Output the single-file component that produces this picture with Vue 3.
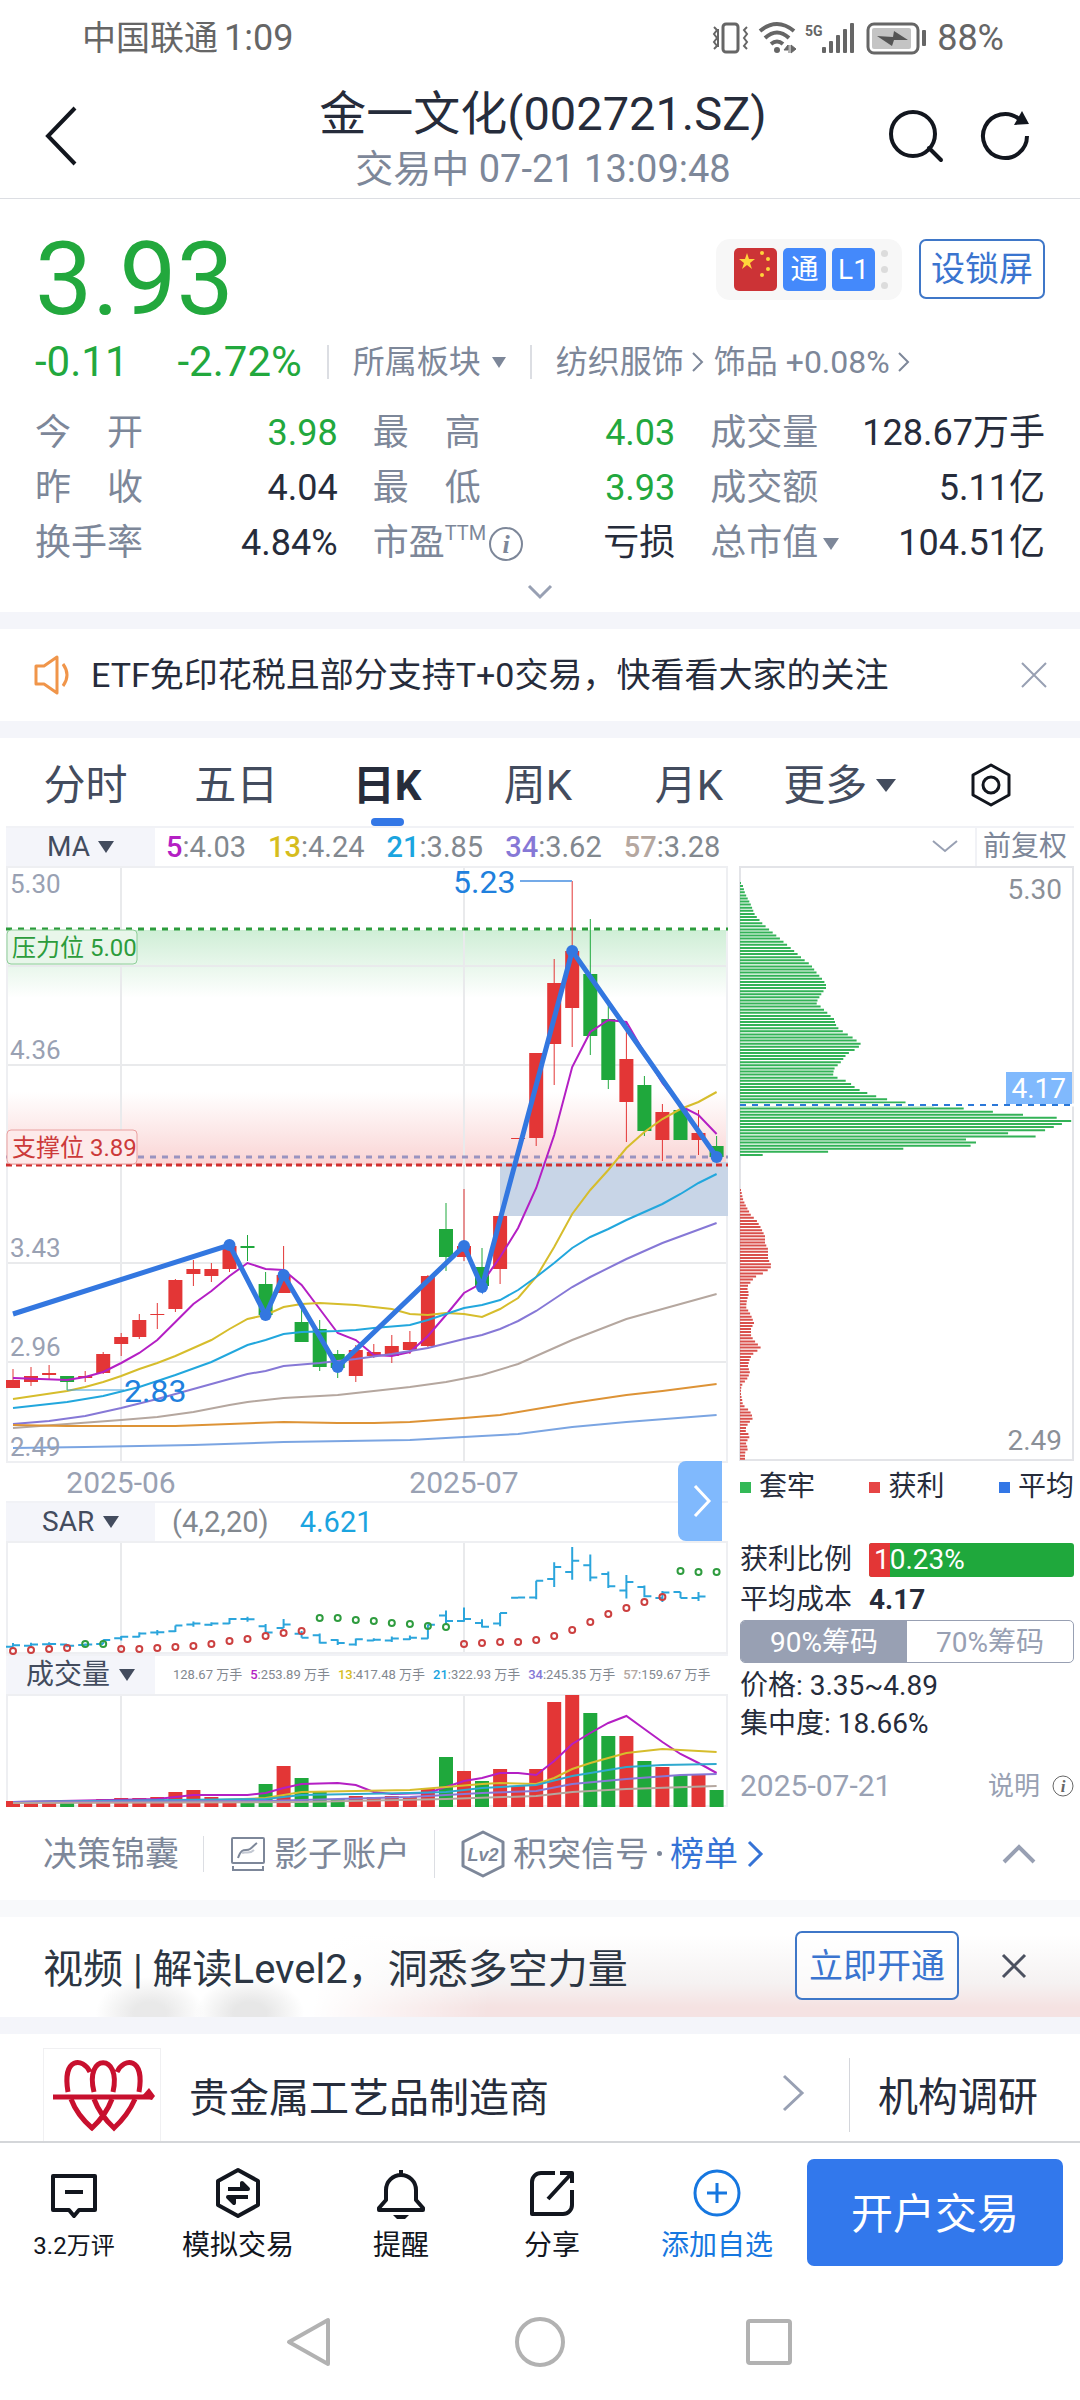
<template>
  <div class="page">
    <div class="status-bar">
      <span>中国联通</span>
      <span class="time">1:09</span>
      <svg class="status-icons" width="216" height="34" viewBox="0 0 216 34">
        <g fill="none" stroke="#666" stroke-width="3">
          <rect x="12" y="3" width="15" height="28" rx="3" />
          <path d="M3 6l3 3-3 4 3 4-3 4 3 4-3 3M7 8v18M36 6l-3 3 3 4-3 4 3 4-3 4 3 3" stroke-width="2" />
          <path d="M49 10Q66-4 83 10M54 17Q66 6 78 17M60 23Q66 18 72 23" stroke-width="4" />
          <rect x="157" y="3" width="50" height="29" rx="6" />
        </g>
        <g fill="#666">
          <circle cx="66" cy="29" r="3" />
          <path d="M78 24v8M73 29l4-5v5zM80 24v8l5-4z" stroke="#666" />
          <rect x="111" y="26" width="4" height="6" rx="1" />
          <rect x="118" y="20" width="4" height="12" rx="1" />
          <rect x="125" y="14" width="4" height="18" rx="1" />
          <rect x="132" y="8" width="4" height="24" rx="1" />
          <rect x="139" y="2" width="4" height="30" rx="1" />
          <rect x="211" y="9" width="4" height="16" rx="1" />
          <text x="94" y="15" font-size="14" font-weight="700">5G</text>
        </g>
        <rect x="161" y="7" width="39" height="21" rx="2" fill="#c4c4c4" />
        <path d="M166 15l16 1 1-6 14 9-14 0-2 6z" fill="#555" />
      </svg>
      <span>88%</span>
    </div>

    <header class="header">
      <button class="icon-btn back" aria-label="返回">
        <svg width="34" height="60" viewBox="0 0 34 60"><path d="M31 2L4 30l27 28" fill="none" stroke="#12161e" stroke-width="4" /></svg>
      </button>
      <div class="title">
        <h1>金一文化(002721.SZ)</h1>
        <p>交易中 07-21 13:09:48</p>
      </div>
      <div class="header-actions">
        <button class="icon-btn" aria-label="搜索">
          <svg width="56" height="54" viewBox="0 0 56 54" fill="none" stroke="#12161e" stroke-width="4">
            <circle cx="25" cy="25" r="22" /><path d="M41 39l12 12" stroke-linecap="round" />
          </svg>
        </button>
        <button class="icon-btn" aria-label="刷新">
          <svg width="52" height="54" viewBox="0 0 52 54" fill="none" stroke="#12161e" stroke-width="4">
            <path d="M47 27A22 22 0 1 1 39 10" /><path d="M34 16l8-14 7 13z" fill="#12161e" stroke="none" />
          </svg>
        </button>
      </div>
    </header>

    <section class="quote">
      <div class="price-row">
        <strong class="price">3.93</strong>
        <div class="chips">
          <span class="chip flag">
            <svg width="43" height="43" viewBox="0 0 43 43" fill="#ffd53a">
              <path d="M13 5l2 6h6l-5 4 2 6-5-4-5 4 2-6-5-4h6z" />
              <circle cx="28" cy="5" r="2" /><circle cx="34" cy="11" r="2" />
              <circle cx="34" cy="21" r="2" /><circle cx="28" cy="27" r="2" />
            </svg>
          </span>
          <span class="chip">通</span>
          <span class="chip">L1</span>
          <span class="dots"><i></i><i></i><i></i></span>
        </div>
        <button class="outline-btn lock">设锁屏</button>
      </div>
      <div class="change-row">
        <span class="change">-0.11</span>
        <span class="change pct">-2.72%</span>
        <span class="sector-select">
          <select aria-label="所属板块"><option>所属板块</option></select><i class="caret small"></i>
        </span>
        <a href="#" class="sector">纺织服饰<svg width="14" height="20" viewBox="0 0 14 20"><path d="M2 1l9 9-9 9" /></svg></a>
        <a href="#" class="sector">饰品 +0.08%<svg width="14" height="20" viewBox="0 0 14 20"><path d="M2 1l9 9-9 9" /></svg></a>
      </div>
      <dl class="stats">
        <div v-for="s in stats" :key="s.label" class="stat">
          <dt>
            <span class="stat-label">{{ s.label }}</span>
            <template v-if="s.info">
              <sup>TTM</sup>
              <svg width="36" height="36" viewBox="0 0 36 36"><circle cx="18" cy="18" r="16" fill="none" stroke="#7d8799" stroke-width="2" /><text x="18" y="27" text-anchor="middle" class="info-i">i</text></svg>
            </template>
            <i v-if="s.caret" class="caret"></i>
          </dt>
          <dd :class="{ down: s.down }">{{ s.value }}</dd>
        </div>
      </dl>
      <button class="expand" aria-label="展开">
        <svg width="26" height="16" viewBox="0 0 26 16"><path d="M2 2l11 11L24 2" fill="none" stroke="#98a0b3" stroke-width="3" /></svg>
      </button>
    </section>

    <section class="notice">
      <svg width="38" height="42" viewBox="0 0 38 42" fill="none" stroke="#f0954a" stroke-width="3" stroke-linejoin="round">
        <path d="M3 12h8L24 3v36L11 30H3zM30 10q8 11 0 22" />
      </svg>
      <span>ETF免印花税且部分支持T+0交易，快看看大家的关注</span>
      <button class="icon-btn" aria-label="关闭">
        <svg width="26" height="26" viewBox="0 0 26 26"><path d="M1 1l24 24M25 1L1 25" stroke="#98a0b3" stroke-width="2" /></svg>
      </button>
    </section>

    <nav class="tabs">
      <button v-for="t in tabs" :key="t" :class="['tab', { active: t === currentTab }]" @click="currentTab = t">{{ t }}</button>
      <span class="tab more">
        <select aria-label="更多周期"><option>更多</option></select><i class="caret"></i>
      </span>
      <button class="tab setting" aria-label="设置">
        <svg width="42" height="46" viewBox="0 0 42 46" fill="none" stroke="#12161e" stroke-width="3">
          <path d="M21 3l18 10v20L21 43 3 33V13z" stroke-linejoin="round" /><circle cx="21" cy="23" r="8" />
        </svg>
      </button>
    </nav>

    <section class="chart-area">
      <div class="ma-head">
        <div class="indicator">
          <select aria-label="主图指标"><option>MA</option></select><i class="caret"></i>
        </div>
        <div class="ma-values">
          <span v-for="m in maValues" :key="m.n"><b :style="{ color: m.color }">{{ m.n }}</b>:{{ m.v }}</span>
        </div>
        <svg class="ma-more" width="26" height="14" viewBox="0 0 26 14"><path d="M1 1l12 10L25 1" fill="none" stroke="#98a0b3" stroke-width="2" /></svg>
        <button class="adjust">前复权</button>
      </div>

      <div class="charts">
        <div class="left">
          <!-- K line -->
          <svg class="chart" viewBox="0 0 722 635">
            <defs>
              <linearGradient id="resist" x1="0" y1="0" x2="0" y2="1">
                <stop offset="0" stop-color="#cfeed6" /><stop offset="1" stop-color="#fff" />
              </linearGradient>
              <linearGradient id="support" x1="0" y1="0" x2="0" y2="1">
                <stop offset="0" stop-color="#fff" /><stop offset="1" stop-color="#fad4d4" />
              </linearGradient>
            </defs>
            <rect x="0" y="64" width="722" height="68" fill="url(#resist)" />
            <rect x="0" y="226" width="722" height="73" fill="url(#support)" />
            <path class="grid" d="M0 100H722M0 199H722M0 397H722M0 496H722M115 1V596M458 1V596" />
            <path class="frame" d="M1 1H721V596H1z" />
            <rect x="494" y="296" width="228" height="54" fill="#c8d5e7" />
            <path d="M0 63H722" stroke="#2c9c3c" stroke-width="3" stroke-dasharray="6 6" />
            <path d="M0 291H722" stroke="#9a93c0" stroke-width="3" stroke-dasharray="6 6" />
            <path d="M0 299H722" stroke="#d03030" stroke-width="3" stroke-dasharray="6 4" />

            <g v-for="(c, i) in candles" :key="i" :fill="c[0] ? red : green" :stroke="c[0] ? red : green">
              <path :d="`M${cx(i)} ${c[1]}V${c[4]}`" stroke-width="1" />
              <rect :x="cx(i) - 7" :y="c[2]" width="14" :height="c[3] - c[2]" stroke="none" />
            </g>
            <path v-for="l in maLines" :key="l.color" :d="linePath(l.pts)" :stroke="l.color" fill="none" stroke-width="2" />

            <path :d="linePath(trend)" fill="none" stroke="#3377e0" stroke-width="5" />
            <circle v-for="p in trend.slice(1)" :key="p[0]" :cx="cx(p[0])" :cy="p[1]" r="6" fill="#3377e0" />

            <g class="axis">
              <text x="4" y="27">5.30</text>
              <text x="4" y="193">4.36</text>
              <text x="4" y="391">3.43</text>
              <text x="4" y="490">2.96</text>
              <text x="4" y="590">2.49</text>
            </g>
            <g class="mark">
              <path d="M514 15H566" stroke="#74aae8" stroke-width="2" />
              <text x="447" y="27">5.23</text>
              <path d="M61 524H118" stroke="#3f9ed8" stroke-width="1" />
              <text x="118" y="536">2.83</text>
            </g>
            <g class="level">
              <rect x="1" y="64" width="130" height="34" rx="4" fill="#e8f6ea" stroke="#8fce99" />
              <text x="6" y="90" fill="#2c9c3c">压力位 5.00</text>
              <rect x="1" y="264" width="130" height="34" rx="4" fill="#fdeaea" stroke="#eaa0a0" />
              <text x="6" y="290" fill="#cc3a3a">支撑位 3.89</text>
            </g>
            <g class="dates">
              <text x="115" y="627">2025-06</text>
              <text x="458" y="627">2025-07</text>
            </g>
          </svg>
          <button class="next" aria-label="展开筹码">
            <svg width="20" height="32" viewBox="0 0 20 32"><path d="M2 1l14 15L2 31" fill="none" stroke="#fff" stroke-width="3" /></svg>
          </button>

          <!-- SAR -->
          <div class="sub-head">
            <div class="indicator">
              <select aria-label="副图指标一"><option>SAR</option></select><i class="caret"></i>
            </div>
            <span class="sar-param">(4,2,20)</span><span class="sar-value">4.621</span>
          </div>
          <svg class="chart" viewBox="0 0 722 113">
            <path class="grid" d="M115 1V112M458 1V112" />
            <path class="frame" d="M1 1H721V112H1z" />
            <path :d="sarBars" fill="none" stroke="#2ba5dc" stroke-width="2" />
            <circle v-for="(y, i) in sar" :key="i" :cx="cx(i)" :cy="y" r="3" fill="none" stroke-width="2" :stroke="sarGreen(i) ? '#2f9c3f' : '#cc4040'" />
          </svg>

          <!-- volume -->
          <div class="sub-head">
            <div class="indicator">
              <select aria-label="副图指标二"><option>成交量</option></select><i class="caret"></i>
            </div>
            <div class="vol-values">
              <span v-for="v in volValues" :key="v.v"><b v-if="v.n" :style="{ color: v.color }">{{ v.n }}</b>{{ v.n ? ':' : '' }}{{ v.v }} 万手</span>
            </div>
          </div>
          <svg class="chart" viewBox="0 0 722 113">
            <path class="grid" d="M115 1V112M458 1V112" />
            <path class="frame" d="M1 1H721V112H1z" />
            <rect v-for="(y, i) in volumes" :key="i" :x="cx(i) - 7" :y="y" width="14" :height="113 - y" :fill="candles[i][0] ? red : green" />
            <path v-for="l in volLines" :key="l.color" :d="linePath(l.pts)" :stroke="l.color" fill="none" stroke-width="2" />
          </svg>
        </div>

        <div class="right">
          <svg class="chart" viewBox="0 0 334 595">
            <path d="M0 1H333V594H0z" fill="none" stroke="#e3e4e8" stroke-width="2" />
            <path :d="profilePath(trapped)" stroke="#33b257" stroke-width="2" />
            <path :d="profilePath(profit)" stroke="#d9504c" stroke-width="2" />
            <path d="M0 239H334" stroke="#fff" stroke-width="3" />
            <path d="M0 239H334" stroke="#2b78d8" stroke-width="2" stroke-dasharray="6 6" />
            <rect x="266" y="206" width="66" height="32" fill="#80b9fd" />
            <g class="profile-text">
              <text x="322" y="33">5.30</text>
              <text x="322" y="584">2.49</text>
              <text x="326" y="232" fill="#fff">4.17</text>
            </g>
          </svg>
          <div class="legend">
            <span><i style="background: #33b957"></i>套牢</span>
            <span><i style="background: #e64545"></i>获利</span>
            <span><i style="background: #3377e6"></i>平均</span>
          </div>
          <div class="chip-row ratio">
            <span>获利比例</span>
            <div class="ratio-bar"><i :style="{ width: '10.23%' }"></i><em>10.23%</em></div>
          </div>
          <div class="chip-row"><span>平均成本</span><b>4.17</b></div>
          <div class="segment">
            <button v-for="r in ranges" :key="r" :class="{ on: r === range }" @click="range = r">{{ r }}筹码</button>
          </div>
          <p class="chip-line">价格: 3.35~4.89</p>
          <p class="chip-line">集中度: 18.66%</p>
          <div class="chip-foot">
            <span class="date">2025-07-21</span>
            <a href="#">说明
              <svg width="22" height="22" viewBox="0 0 22 22"><circle cx="11" cy="11" r="10" fill="none" stroke="#666" /><text x="11" y="17" text-anchor="middle" class="info-i sm">i</text></svg>
            </a>
          </div>
        </div>
      </div>
    </section>

    <section class="tools">
      <a href="#">决策锦囊</a>
      <a href="#">
        <svg width="36" height="36" viewBox="0 0 36 36" fill="none" stroke="#7d8799" stroke-width="2">
          <rect x="2" y="2" width="32" height="25" rx="1" /><path d="M3 30v4h30v-4" />
          <path d="M8 22c4-12 8-6 12-9 3-2 4-4 7-6" /><path d="M12 17c4-2 7 2 12-3" stroke="#c3c8d2" />
        </svg>影子账户
      </a>
      <a href="#">
        <svg width="44" height="48" viewBox="0 0 44 48">
          <path d="M22 2l20 10v24L22 46 2 36V12z" fill="none" stroke="#7d8799" stroke-width="3" stroke-linejoin="round" />
          <text x="22" y="31" text-anchor="middle" class="lv">Lv2</text>
        </svg>积突信号<i class="dot"></i><em>榜单</em>
        <svg class="go" width="18" height="28" viewBox="0 0 18 28"><path d="M3 2l12 12L3 26" fill="none" stroke="#3573d6" stroke-width="3" /></svg>
      </a>
      <button class="icon-btn" aria-label="收起">
        <svg width="34" height="20" viewBox="0 0 34 20"><path d="M2 18L17 3l15 15" fill="none" stroke="#98a0b3" stroke-width="4" /></svg>
      </button>
    </section>

    <section class="promo">
      <span>视频 | 解读Level2，洞悉多空力量</span>
      <button class="outline-btn open">立即开通</button>
      <button class="icon-btn" aria-label="关闭">
        <svg width="26" height="26" viewBox="0 0 26 26"><path d="M2 2l22 22M24 2L2 24" stroke="#4c5160" stroke-width="3" /></svg>
      </button>
    </section>

    <section class="company">
      <div class="logo">
        <svg width="116" height="92" viewBox="0 0 116 92" fill="none" stroke="#c8102e" stroke-width="5">
          <path d="M24 43C18 8 39 8 46 23M50 43C40 4 78 4 69 43M73 23C80 8 101 8 95 43" />
          <path d="M27 50Q33 66 48 79Q62 66 68 50M50 50Q56 66 70 79Q84 66 91 50" />
          <path d="M9 48H108" /><path d="M98 47l7-8 6 8-3 4z" fill="#c8102e" stroke="none" />
        </svg>
      </div>
      <a href="#" class="company-name">贵金属工艺品制造商
        <svg width="24" height="38" viewBox="0 0 24 38"><path d="M2 2l18 17L2 36" fill="none" stroke="#98a0b3" stroke-width="3" /></svg>
      </a>
      <a href="#" class="research">机构调研</a>
    </section>

    <footer class="bottom">
      <button class="action">
        <svg width="48" height="52" viewBox="0 0 48 52"><path d="M3 9h42v34H29l-5 6-5-6H3zM15 25h18" /></svg>
        <span class="count">3.2万评</span>
      </button>
      <button class="action">
        <svg width="48" height="52" viewBox="0 0 48 52"><path d="M24 3l20 11v24L24 49 4 38V14z" /><path d="M14 22h20l-6-6v6M34 30H14l6 6v-6" /></svg>
        <span>模拟交易</span>
      </button>
      <button class="action">
        <svg width="48" height="52" viewBox="0 0 48 52"><path d="M24 3v5M9 33V23a15 15 0 0 1 30 0v10l7 8v2H2v-2z" /><path d="M16 48h16l-4 4h-8z" fill="#12161e" stroke="none" /></svg>
        <span>提醒</span>
      </button>
      <button class="action">
        <svg width="48" height="52" viewBox="0 0 48 52"><path d="M27 6H13a9 9 0 0 0-9 9v32h31a9 9 0 0 0 9-9V23M32 6h12v10M43 7L20 32" /></svg>
        <span>分享</span>
      </button>
      <button class="action add">
        <svg width="48" height="52" viewBox="0 0 48 52"><circle cx="24" cy="26" r="22" /><path d="M24 16v20M14 26h20" /></svg>
        <span>添加自选</span>
      </button>
      <button class="trade">开户交易</button>
    </footer>

    <div class="sys-nav">
      <button class="icon-btn" aria-label="后退"><svg width="52" height="52" viewBox="0 0 52 52"><path d="M43 4v44L4 26z" /></svg></button>
      <button class="icon-btn" aria-label="主页"><svg width="52" height="52" viewBox="0 0 52 52"><circle cx="26" cy="26" r="23" /></svg></button>
      <button class="icon-btn" aria-label="最近任务"><svg width="52" height="52" viewBox="0 0 52 52"><rect x="5" y="5" width="42" height="42" rx="2" /></svg></button>
    </div>
  </div>
</template>

<script setup>
import { ref, computed } from 'vue'

const red = '#e33636'
const green = '#1fa83c'

const stats = [
  { label: '今开', value: '3.98', down: true },
  { label: '最高', value: '4.03', down: true },
  { label: '成交量', value: '128.67万手' },
  { label: '昨收', value: '4.04' },
  { label: '最低', value: '3.93', down: true },
  { label: '成交额', value: '5.11亿' },
  { label: '换手率', value: '4.84%' },
  { label: '市盈', value: '亏损', info: true },
  { label: '总市值', value: '104.51亿', caret: true }
]

const tabs = ['分时', '五日', '日K', '周K', '月K']
const currentTab = ref('日K')

const ranges = ['90%', '70%']
const range = ref('90%')

const maValues = [
  { n: 5, v: '4.03', color: '#b41fc4' },
  { n: 13, v: '4.24', color: '#d6bd1e' },
  { n: 21, v: '3.85', color: '#1ba4df' },
  { n: 34, v: '3.62', color: '#8678d6' },
  { n: 57, v: '3.28', color: '#b5a79f' }
]

const volValues = [
  { v: '128.67' },
  { n: 5, v: '253.89', color: '#b41fc4' },
  { n: 13, v: '417.48', color: '#d6bd1e' },
  { n: 21, v: '322.93', color: '#1ba4df' },
  { n: 34, v: '245.35', color: '#8678d6' },
  { n: 57, v: '159.67', color: '#b5a79f' }
]

// [涨?, 最高, 实体上, 实体下, 最低]
const candles = [
  [1, 503, 514, 522, 522], [1, 501, 510, 516, 520], [1, 499, 507, 509, 514], [0, 510, 510, 516, 524],
  [1, 505, 510, 512, 516], [1, 486, 488, 507, 508], [1, 467, 471, 478, 490], [1, 448, 454, 471, 473],
  [1, 437, 448, 449, 463], [1, 413, 414, 443, 446], [1, 394, 403, 408, 420], [1, 397, 403, 410, 416],
  [1, 376, 380, 403, 406], [0, 369, 380, 382, 395], [0, 406, 418, 449, 451], [1, 380, 409, 427, 427],
  [0, 442, 456, 476, 476], [0, 454, 463, 501, 505], [0, 484, 488, 502, 512], [1, 479, 484, 510, 516],
  [1, 478, 486, 490, 492], [1, 469, 480, 490, 497], [1, 465, 476, 484, 488], [1, 409, 410, 480, 481],
  [0, 337, 363, 391, 405], [1, 323, 380, 391, 395], [0, 382, 401, 420, 424], [1, 350, 350, 403, 418],
  [1, 272, 272, 273, 273], [1, 187, 187, 272, 280], [1, 93, 117, 178, 219], [1, 15, 85, 142, 181],
  [0, 53, 108, 170, 189], [0, 139, 153, 214, 223], [1, 157, 193, 236, 276], [0, 210, 219, 265, 270],
  [1, 238, 246, 274, 295], [0, 244, 244, 274, 274], [1, 244, 267, 274, 289], [0, 270, 280, 291, 292]
]

const trend = [[0, 448], [12, 379], [14, 449], [15, 409], [18, 501], [25, 380], [26, 421], [31, 85], [39, 291]]

const maLines = [
  { color: '#b41fc4', pts: [[0, 512], [3, 514], [4, 511], [5, 506], [6, 497], [7, 487], [8, 474], [9, 456], [10, 438], [11, 425], [12, 410], [13, 397], [14, 403], [15, 404], [16, 419], [17, 443], [18, 467], [19, 474], [20, 489], [21, 490], [22, 486], [23, 470], [24, 449], [25, 427], [26, 417], [27, 391], [28, 362], [29, 322], [30, 269], [31, 201], [32, 166], [33, 154], [34, 156], [35, 187], [36, 217], [37, 240], [38, 249], [39, 268]] },
  { color: '#d6bd2c', pts: [[0, 533], [3, 525], [4, 521], [5, 516], [6, 510], [7, 503], [8, 497], [9, 490], [10, 482], [11, 474], [12, 463], [13, 453], [14, 449], [15, 441], [16, 438], [17, 437], [18, 438], [19, 439], [20, 441], [21, 443], [22, 448], [23, 449], [24, 447], [25, 448], [26, 451], [27, 443], [28, 432], [29, 411], [30, 381], [31, 348], [32, 324], [33, 304], [34, 282], [35, 266], [36, 253], [37, 243], [38, 236], [39, 226]] },
  { color: '#22a7dd', pts: [[0, 542], [3, 536], [5, 530], [7, 521], [9, 509], [11, 496], [13, 479], [14, 474], [15, 468], [16, 466], [18, 465], [19, 464], [20, 462], [22, 459], [23, 454], [24, 448], [25, 442], [26, 439], [27, 434], [28, 424], [29, 411], [30, 397], [31, 382], [32, 371], [33, 363], [34, 354], [36, 338], [37, 328], [38, 317], [39, 308]] },
  { color: '#8678d6', pts: [[0, 558], [2, 555], [4, 550], [6, 542], [8, 533], [10, 523], [12, 513], [13, 508], [14, 505], [15, 500], [17, 497], [19, 493], [21, 488], [23, 482], [25, 473], [26, 469], [27, 463], [28, 455], [29, 445], [31, 421], [32, 411], [34, 393], [36, 377], [39, 357]] },
  { color: '#b5a79f', pts: [[0, 562], [3, 558], [6, 554], [8, 551], [10, 546], [12, 539], [13, 536], [15, 532], [18, 529], [20, 525], [22, 521], [24, 516], [26, 509], [28, 498], [30, 482], [31, 474], [34, 453], [36, 443], [39, 428]] },
  { color: '#dd9336', pts: [[0, 559], [3, 560], [9, 560], [12, 558], [15, 556], [18, 557], [20, 557], [22, 556], [25, 552], [27, 549], [29, 543], [31, 537], [34, 529], [36, 525], [39, 518]] },
  { color: '#7ba5e2', pts: [[0, 582], [4, 581], [10, 579], [15, 576], [22, 574], [26, 570], [28, 568], [31, 561], [34, 556], [39, 549]] }
]

const sar = [
  110, 109, 108, 107, 103, 103, 108, 108, 107, 106, 105, 103, 100, 98, 95, 92, 90, 77, 77, 79,
  80, 82, 83, 85, 86, 103, 102, 101, 101, 99, 95, 89, 81, 73, 67, 61, 56, 30, 31, 31
]
const sarGreen = (i) => i === 4 || i === 5 || (i >= 17 && i <= 24) || i >= 37

const volumes = [
  107, 108, 108, 108, 107, 105, 104, 104, 103, 98, 96, 103, 107, 104, 90, 72, 84, 98, 105, 102,
  103, 102, 103, 94, 63, 77, 87, 75, 92, 75, 8, 1, 19, 42, 42, 67, 73, 81, 81, 96
]

const volLines = [
  { color: '#b41fc4', pts: [[0, 108], [8, 105], [10, 101], [13, 101], [14, 99], [15, 94], [16, 90], [18, 89], [19, 91], [20, 98], [21, 100], [23, 99], [24, 93], [25, 87], [26, 84], [27, 79], [28, 79], [29, 81], [30, 67], [31, 50], [32, 39], [33, 29], [34, 22], [35, 35], [36, 48], [37, 60], [38, 69], [39, 79]] },
  { color: '#d6bd2c', pts: [[0, 108], [10, 107], [14, 104], [16, 98], [22, 96], [24, 93], [26, 90], [27, 89], [29, 90], [30, 84], [31, 75], [32, 69], [33, 64], [34, 59], [35, 57], [36, 55], [39, 58]] },
  { color: '#2fa9cf', pts: [[0, 108], [14, 105], [16, 101], [22, 99], [24, 98], [26, 94], [29, 91], [31, 82], [33, 76], [34, 73], [36, 71], [39, 70]] },
  { color: '#8678d6', pts: [[0, 108], [14, 107], [22, 103], [26, 99], [29, 97], [31, 90], [34, 85], [37, 81], [39, 80]] },
  { color: '#b5a79f', pts: [[0, 109], [16, 108], [24, 105], [29, 102], [31, 98], [34, 95], [39, 92]] }
]

// 筹码分布 [y, 宽度]
const trapped = [
  [17, 1], [20, 3], [27, 5], [39, 11], [49, 15], [58, 23], [65, 31], [77, 45], [83, 52], [93, 63], [99, 71], [106, 76],
  [115, 84], [119, 86], [122, 86], [127, 82], [137, 76], [140, 80], [153, 94], [159, 96], [163, 99], [171, 112],
  [178, 121], [182, 118], [188, 107], [195, 102], [203, 94], [210, 93], [216, 109], [223, 117], [229, 132], [235, 153],
  [238, 180], [241, 208], [244, 238], [248, 274], [251, 310], [254, 334], [257, 325], [260, 316], [264, 308],
  [267, 264], [270, 306], [273, 224], [276, 237], [280, 230], [283, 157], [286, 84], [289, 21]
]
const profit = [
  [324, 1], [333, 3], [340, 6], [349, 11], [355, 17], [362, 21], [370, 25], [377, 25], [383, 28], [393, 28], [400, 32],
  [406, 26], [411, 15], [416, 11], [421, 7], [428, 9], [434, 7], [441, 6], [449, 11], [457, 14], [463, 11], [469, 11],
  [473, 13], [482, 21], [488, 13], [492, 10], [500, 8], [507, 10], [513, 7], [519, 2], [523, 1], [529, 1], [533, 2],
  [539, 3], [545, 10], [552, 13], [558, 8], [564, 5], [570, 10], [577, 6], [583, 8], [587, 5], [593, 5]
]

const cx = (i) => +(7 + i * 18.04).toFixed(1)

const linePath = (pts) => 'M' + pts.map((p) => `${cx(p[0])} ${p[1]}`).join('L')

const sarBars = computed(() => {
  const sy = (y) => (y * 0.197 + 3).toFixed(1)
  return candles.slice(0, 39).map((c, i) => {
    const [up, high, top, bottom, low] = c
    const open = up ? bottom : top
    const close = up ? top : bottom
    return `M${cx(i) - 7} ${sy(open)}H${cx(i)}M${cx(i)} ${sy(high)}V${sy(low)}M${cx(i)} ${sy(close)}h7`
  }).join('')
})

const profilePath = (pts) => {
  let d = ''
  let k = 0
  const last = pts[pts.length - 1][0]
  for (let y = pts[0][0]; y <= last; y += 3.09) {
    while (k < pts.length - 2 && pts[k + 1][0] < y) k++
    const [y0, w0] = pts[k]
    const [y1, w1] = pts[k + 1]
    const w = w0 + ((w1 - w0) * (y - y0)) / (y1 - y0)
    d += `M0 ${y.toFixed(1)}H${w.toFixed(1)}`
  }
  return d
}
</script>

<style>
body {
  margin: 0;
  background: #fff;
}
</style>

<style scoped>
.page {
  font-family: Roboto, "Noto Sans CJK SC", sans-serif;
  color: #262c3b;
  background: #fff;
  overflow: hidden;
}

h1, p, dl, dd {
  margin: 0;
  font-weight: 400;
}

i, em {
  font-style: normal;
}

svg {
  flex: none;
}

a {
  color: inherit;
  text-decoration: none;
}

button, select {
  font: inherit;
  color: inherit;
  background: none;
  border: 0;
  padding: 0;
  margin: 0;
  appearance: none;
  white-space: nowrap;
}

.icon-btn {
  display: flex;
}

.caret {
  flex: none;
  border: 8px solid transparent;
  border-top: 12px solid #434c5e;
  border-bottom: 0;
}

.caret.small {
  border-width: 11px 7px 0;
  border-top-color: #7d8799;
}

/* status bar */
.status-bar {
  display: flex;
  align-items: center;
  padding: 16px 76px 12px 82px;
  font-size: 36px;
  line-height: 44px;
  color: #666;
}

.status-bar span:first-child {
  font-size: 34px;
}

.time {
  margin-left: 6px;
}

.status-icons {
  margin: 0 10px 0 auto;
}

/* header */
.header {
  display: grid;
  grid-template-columns: 1fr auto 1fr;
  align-items: center;
  padding: 16px 38px 6px 44px;
  border-bottom: 1px solid #dcdee3;
}

.back, .header-actions {
  margin-bottom: 8px;
}

.title {
  text-align: center;
}

.title h1 {
  font-size: 47px;
  line-height: 52px;
}

.title p {
  margin-top: 6px;
  font-size: 38px;
  line-height: 46px;
  color: #7d8799;
}

.header-actions {
  display: flex;
  justify-content: flex-end;
  gap: 36px;
  margin-right: 10px;
}

/* quote */
.quote {
  padding: 34px 35px 0;
}

.price-row {
  display: flex;
  align-items: center;
}

.price {
  flex: 1;
  font-size: 102px;
  line-height: 92px;
  font-weight: 400;
  color: #22a83d;
}

.chips {
  display: flex;
  align-items: center;
  gap: 6px;
  margin: 0 17px 20px 0;
  padding: 9px 14px 9px 18px;
  border-radius: 14px;
  background: #f7f7f7;
}

.chip {
  width: 43px;
  border-radius: 5px;
  background: #4489fb;
  color: #fff;
  font-size: 28px;
  line-height: 43px;
  text-align: center;
}

.flag {
  display: flex;
  background: #cc3336;
}

.dots {
  display: grid;
  gap: 9px;
}

.dots i {
  width: 7px;
  height: 7px;
  border-radius: 50%;
  background: #dcdcdc;
}

.outline-btn {
  border: 2px solid #3f77c8;
  border-radius: 7px;
  font-size: 34px;
  color: #3a74cf;
}

.lock {
  margin-bottom: 20px;
  padding: 0 10px;
  line-height: 56px;
}

.change-row {
  display: flex;
  align-items: center;
  margin-top: 15px;
  font-size: 32px;
  line-height: 44px;
  color: #7d8799;
}

.change {
  font-size: 42px;
  color: #22a83d;
}

.pct {
  margin-left: 49px;
}

.sector-select {
  display: flex;
  align-items: center;
  gap: 10px;
  margin: 0 24px 0 25px;
  padding: 0 24px 0 24px;
  border: solid #dcdee3;
  border-width: 0 2px;
  line-height: 34px;
}

.sector {
  display: flex;
  align-items: center;
  gap: 7px;
  margin-right: 9px;
}

.sector path {
  fill: none;
  stroke: #7d8799;
  stroke-width: 2;
}

.stats {
  display: grid;
  grid-template-columns: 303fr 303fr 335fr;
  column-gap: 35px;
  margin-top: 22px;
  font-size: 36px;
  line-height: 55px;
}

.stat {
  display: flex;
  justify-content: space-between;
  white-space: nowrap;
}

.stat dt {
  display: flex;
  align-items: center;
  color: #7d8799;
}

.stat-label {
  min-width: 108px;
  text-align: justify;
  text-align-last: justify;
}

.stat-label:has(+ sup) {
  min-width: 0;
}

.stat sup {
  align-self: flex-start;
  margin-right: 2px;
  font-size: 20px;
  line-height: 34px;
}

.stat .caret {
  margin-left: 5px;
  border-top-color: #7d8799;
}

.info-i {
  font: italic 700 26px "Liberation Serif", serif;
  fill: #7d8799;
}

.info-i.sm {
  font-size: 17px;
  fill: #666;
}

.down {
  color: #22a83d;
}

.expand {
  display: flex;
  align-items: center;
  justify-content: center;
  width: 100%;
  height: 41px;
}

/* notice */
.notice {
  display: flex;
  align-items: center;
  gap: 20px;
  padding: 0 33px;
  border: solid #f4f5fa;
  border-width: 17px 0;
  font-size: 34px;
  line-height: 92px;
}

.notice span {
  flex: 1;
}

/* tabs */
.tabs {
  display: flex;
  padding: 0 14px 0 10px;
}

.tab {
  position: relative;
  flex: 1;
  display: flex;
  align-items: center;
  justify-content: center;
  height: 88px;
  padding-bottom: 2px;
  box-sizing: border-box;
  font-size: 42px;
  color: #434c5e;
}

.tab.active {
  font-weight: 700;
  color: #262c3b;
}

.tab.active::after {
  content: "";
  position: absolute;
  bottom: 0;
  width: 33px;
  height: 8px;
  border-radius: 4px;
  background: #3377e6;
}

.more, .setting {
  padding: 6px 0 0;
}

.more {
  gap: 8px;
}

.more .caret {
  border-width: 13px 10px 0;
}

/* chart */
.chart-area {
  padding: 0 6px;
}

.ma-head, .sub-head {
  display: flex;
  align-items: center;
  border-top: 2px solid #f1f2f6;
  font-size: 28px;
  line-height: 38px;
}

.indicator {
  display: flex;
  align-items: center;
  justify-content: center;
  gap: 8px;
  width: 149px;
  background: #f4f5fa;
  color: #434c5e;
}

.ma-values {
  display: flex;
  gap: 22px;
  margin-left: 11px;
  font-size: 29px;
  color: #82888f;
}

b {
  font-weight: 500;
}

.ma-more {
  margin-left: auto;
}

.adjust {
  margin-left: 17px;
  padding: 0 7px 0 6px;
  border-left: 2px solid #f1f2f6;
  color: #7d8799;
}

.charts {
  display: grid;
  grid-template-columns: 722fr 334fr;
  gap: 12px;
}

.left {
  position: relative;
}

.chart {
  display: block;
  width: 100%;
  overflow: visible;
}

.grid {
  fill: none;
  stroke: #e9eaec;
  stroke-width: 2;
}

.frame {
  fill: none;
  stroke: #eeeff2;
  stroke-width: 2;
}

.axis {
  font-size: 26px;
  fill: #99a1b3;
}

.mark {
  font-size: 32px;
  fill: #2080dd;
}

.level {
  font-size: 24px;
}

.dates {
  font-size: 30px;
  fill: #99a1b3;
  text-anchor: middle;
}

.next {
  position: absolute;
  top: 595px;
  right: 6px;
  display: flex;
  align-items: center;
  justify-content: center;
  width: 44px;
  height: 80px;
  padding-left: 5px;
  border-radius: 8px 0 0 8px;
  background: #80b9fd;
}

.sar-param {
  margin-left: 17px;
  color: #82888f;
}

.sar-value {
  margin-left: 31px;
  color: #1ba4df;
}

.sar-param, .sar-value {
  font-size: 29px;
}

.vol-values {
  display: flex;
  gap: 8px;
  margin-left: 18px;
  font-size: 13px;
  color: #82888f;
  white-space: nowrap;
}

.right {
  font-size: 28px;
  line-height: 38px;
}

.profile-text {
  font-size: 28px;
  fill: #8b9098;
  text-anchor: end;
}

.legend {
  display: flex;
  justify-content: space-between;
  margin-top: 6px;
  line-height: 40px;
}

.legend span {
  display: flex;
  align-items: center;
  gap: 8px;
}

.legend i {
  width: 11px;
  height: 11px;
}

.chip-row {
  display: flex;
  gap: 17px;
  margin-top: 4px;
}

.chip-row b {
  font-weight: 700;
}

.ratio {
  margin-top: 36px;
  line-height: 34px;
}

.ratio-bar {
  position: relative;
  flex: 1;
  border-radius: 3px;
  background: #1fa83c;
  overflow: hidden;
}

.ratio-bar i {
  position: absolute;
  inset: 0 auto 0 0;
  background: #e33636;
}

.ratio-bar em {
  position: relative;
  margin-left: 5px;
  color: #fff;
}

.segment {
  display: flex;
  margin: 1px 0 4px;
  border: 1px solid #98a0b3;
  border-radius: 5px;
  overflow: hidden;
}

.segment button {
  flex: 1;
  padding-top: 2px;
  line-height: 39px;
  color: #98a0b3;
}

.segment .on {
  background: #98a0b3;
  color: #fff;
}

.chip-foot {
  display: flex;
  align-items: center;
  justify-content: space-between;
  margin-top: 24px;
  font-size: 26px;
  color: #99a1b3;
}

.date {
  font-size: 30px;
}

.chip-foot a {
  display: flex;
  align-items: center;
  gap: 12px;
}

/* tools */
.tools {
  display: flex;
  align-items: center;
  height: 93px;
  padding: 0 44px 0 43px;
  font-size: 34px;
  line-height: 36px;
  color: #7d8799;
}

.tools a {
  display: flex;
  align-items: center;
  gap: 8px;
}

.tools a + a {
  margin-left: 24px;
  padding-left: 26px;
  border-left: 1px solid #dcdee3;
}

.dot {
  width: 5px;
  height: 5px;
  border-radius: 50%;
  background: #7d8799;
}

.tools em {
  color: #3573d6;
}

.tools .icon-btn {
  margin-left: auto;
}

.lv {
  font: italic 700 18px "Liberation Sans", sans-serif;
  fill: #7d8799;
}

/* promo */
.promo {
  display: flex;
  align-items: center;
  padding: 14px 53px 17px 43px;
  border: solid #f4f5fa;
  border-width: 17px 0;
  border-top-color: #f8f9fb;
  font-size: 40px;
  color: #2c3643;
  background:
    radial-gradient(ellipse 54px 36px at 150px 96px, #e9e9e9 30%, #fff0),
    radial-gradient(ellipse 54px 36px at 250px 96px, #e7e7e7 30%, #fff0),
    linear-gradient(100deg, #fff 30%, #fff0 46%),
    linear-gradient(#fff 18%, #f5f2f2 66%, #f5e2e2 90%);
}

.promo > span {
  flex: 1;
}

.open {
  margin-right: 42px;
  padding: 2px 12px 0;
  line-height: 63px;
  background: #fff9;
}

/* company */
.company {
  display: flex;
  align-items: center;
  height: 107px;
  padding: 0 42px 0 43px;
  font-size: 40px;
  overflow: hidden;
}

.logo {
  align-self: flex-start;
  margin-top: 14px;
  border: 1px solid #f0f0f2;
  height: 117px;
}

.logo svg {
  display: block;
}

.company-name {
  flex: 1;
  display: flex;
  align-items: center;
  justify-content: space-between;
  margin: 23px 43px 8px 28px;
}

.company-name svg {
  margin-bottom: 4px;
}

.research {
  align-self: flex-end;
  margin-bottom: 9px;
  padding: 6px 0 0 28px;
  border-left: 1px solid #d4d6db;
  line-height: 68px;
}

/* bottom bar */
.bottom {
  display: grid;
  grid-template-columns: 148fr 180fr 146fr 156fr 174fr 276fr;
  padding: 16px 0 17px;
  border-top: 2px solid #d4d6d9;
}

.action {
  display: flex;
  flex-direction: column;
  align-items: center;
  padding-top: 8px;
  font-size: 28px;
  line-height: 40px;
  color: #12161e;
}

.action span {
  margin-top: 7px;
}

.action .count {
  font-size: 24px;
}

.action svg {
  fill: none;
  stroke: #12161e;
  stroke-width: 4;
  stroke-linejoin: round;
}

.add {
  color: #1677e0;
}

.add svg {
  stroke: #1677e0;
  stroke-width: 3;
}

.trade {
  margin: 0 17px 0 3px;
  padding-top: 4px;
  border-radius: 7px;
  background: #3278ec;
  color: #fff;
  font-size: 42px;
  line-height: 102px;
}

.sys-nav {
  display: flex;
  justify-content: center;
  gap: 177px;
  padding: 33px 0;
}

.sys-nav svg {
  fill: none;
  stroke: #b2b2b2;
  stroke-width: 4;
  stroke-linejoin: round;
}
</style>
